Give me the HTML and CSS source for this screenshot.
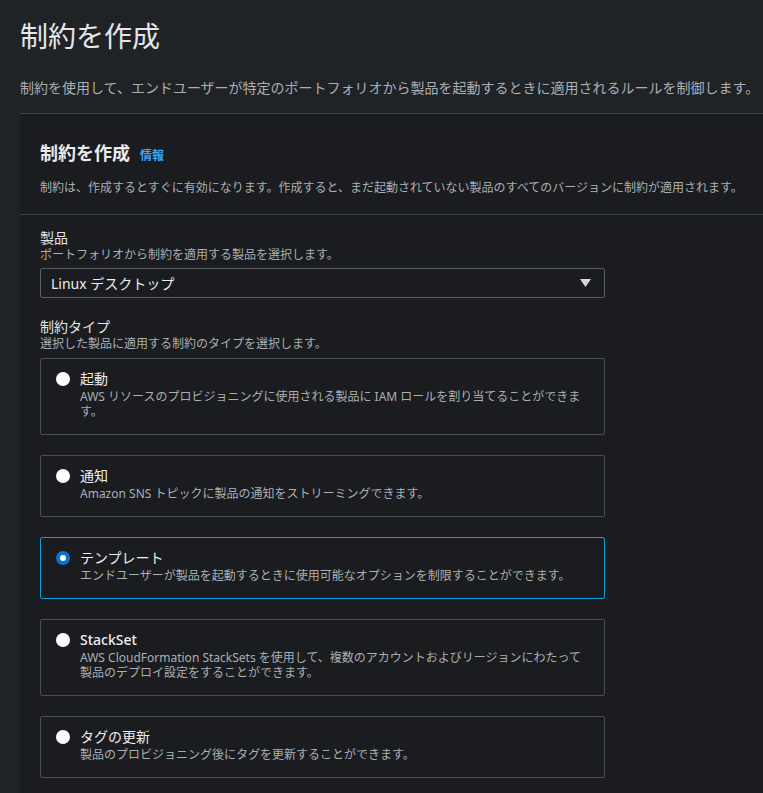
FILE: index.html
```html
<!DOCTYPE html>
<html lang="ja">
<head>
<meta charset="utf-8">
<title>制約を作成</title>
<link rel="stylesheet" href="styles.css">
</head>
<body>
<div class="page">
  <h1 class="page-title">制約を作成</h1>
  <p class="page-desc">制約を使用して、エンドユーザーが特定のポートフォリオから製品を起動するときに適用されるルールを制御します。</p>

  <section class="panel">
    <header class="panel-header">
      <h2 class="panel-title">制約を作成<a class="info-link" href="#">情報</a></h2>
      <p class="panel-desc">制約は、作成するとすぐに有効になります。作成すると、まだ起動されていない製品のすべてのバージョンに制約が適用されます。</p>
    </header>

    <div class="panel-body">
      <div class="field">
        <div class="field-label">製品</div>
        <div class="field-desc">ポートフォリオから制約を適用する製品を選択します。</div>
        <div class="select">
          <span class="select-value">Linux デスクトップ</span>
          <svg class="caret" width="11" height="8" viewBox="0 0 11 8"><path d="M0 0 H11 L5.5 8 Z" fill="#d5d7d9"/></svg>
        </div>
      </div>

      <div class="field field-type">
        <div class="field-label">制約タイプ</div>
        <div class="field-desc">選択した製品に適用する制約のタイプを選択します。</div>
        <div class="tiles">
          <div class="tile">
            <span class="radio"></span>
            <div class="tile-text">
              <div class="tile-title">起動</div>
              <div class="tile-desc">AWS リソースのプロビジョニングに使用される製品に IAM ロールを割り当てることができます。</div>
            </div>
          </div>
          <div class="tile">
            <span class="radio"></span>
            <div class="tile-text">
              <div class="tile-title">通知</div>
              <div class="tile-desc">Amazon SNS トピックに製品の通知をストリーミングできます。</div>
            </div>
          </div>
          <div class="tile tile-selected">
            <span class="radio radio-checked"></span>
            <div class="tile-text">
              <div class="tile-title">テンプレート</div>
              <div class="tile-desc">エンドユーザーが製品を起動するときに使用可能なオプションを制限することができます。</div>
            </div>
          </div>
          <div class="tile">
            <span class="radio"></span>
            <div class="tile-text">
              <div class="tile-title tile-title-latin">StackSet</div>
              <div class="tile-desc">AWS CloudFormation StackSets を使用して、複数のアカウントおよびリージョンにわたって製品のデプロイ設定をすることができます。</div>
            </div>
          </div>
          <div class="tile">
            <span class="radio"></span>
            <div class="tile-text">
              <div class="tile-title">タグの更新</div>
              <div class="tile-desc">製品のプロビジョニング後にタグを更新することができます。</div>
            </div>
          </div>
        </div>
      </div>
    </div>
  </section>
</div>
</body>
</html>
```

FILE: styles.css
```css
html, body {
  margin: 0;
  padding: 0;
  background: #202326;
  overflow: hidden;
}

body {
  font-family: "Noto Sans", "Noto Sans CJK JP", sans-serif;
  color: #e6e8ea;
}

.page {
  padding: 18px 0 0 20px;
}

.page-title {
  margin: 0;
  font-size: 28px;
  line-height: 36px;
  font-weight: 400;
  color: #e4e6e8;
}

.page-desc {
  margin: 24px 0 15px;
  font-size: 14px;
  line-height: 20px;
  color: #a9afb4;
  white-space: nowrap;
}

.panel {
  background: #1b1c1f;
  border-top: 1px solid #3d4045;
}

.panel-header {
  padding: 27px 0 18px 20px;
  border-bottom: 1px solid #3d4045;
}

.panel-title {
  margin: 0;
  font-size: 18px;
  line-height: 24px;
  font-weight: 700;
  color: #e9ebed;
  display: flex;
  align-items: baseline;
}

.info-link {
  margin-left: 10px;
  font-size: 12px;
  font-weight: 700;
  color: #42a4f0;
  text-decoration: none;
}

.panel-desc {
  margin: 12px 0 0;
  font-size: 12px;
  line-height: 16px;
  height: 16px;
  color: #a9afb4;
  white-space: nowrap;
}

.panel-body {
  padding: 13px 0 20px 20px;
}

.field-label {
  font-size: 14px;
  line-height: 19px;
  height: 19px;
  color: #e2e4e6;
}

.field-desc {
  font-size: 12px;
  line-height: 16px;
  height: 16px;
  color: #a9afb4;
}

.select {
  margin-top: 5px;
  width: 565px;
  height: 30px;
  box-sizing: border-box;
  border: 1px solid #5a5e63;
  border-radius: 2px;
  padding: 0 13px 0 10px;
  display: flex;
  align-items: center;
  justify-content: space-between;
}

.select-value {
  font-size: 14px;
  color: #eceef0;
}

.field-type {
  margin-top: 19px;
}

.tiles {
  margin-top: 6px;
  width: 565px;
  display: flex;
  flex-direction: column;
  gap: 20px;
}

.tile {
  border: 1px solid #4a4e54;
  border-radius: 2px;
  padding: 10px 20px 15px 15px;
  display: flex;
  gap: 10px;
  align-items: flex-start;
}

.tile-selected {
  border-color: #0aa2d6;
}

.radio {
  flex: none;
  width: 14px;
  height: 14px;
  margin-top: 3px;
  border-radius: 50%;
  background: #ffffff;
  box-sizing: border-box;
}

.radio-checked {
  background: #ffffff;
  border: 4px solid #0b73cd;
}

.tile-text {
  flex: 1;
  min-width: 0;
}

.tile-title {
  font-size: 14px;
  line-height: 20px;
  color: #eceef0;
}

.tile-title-latin {
  font-weight: 500;
}

.tile-desc {
  font-size: 12px;
  line-height: 15px;
  color: #a9afb4;
}
```
